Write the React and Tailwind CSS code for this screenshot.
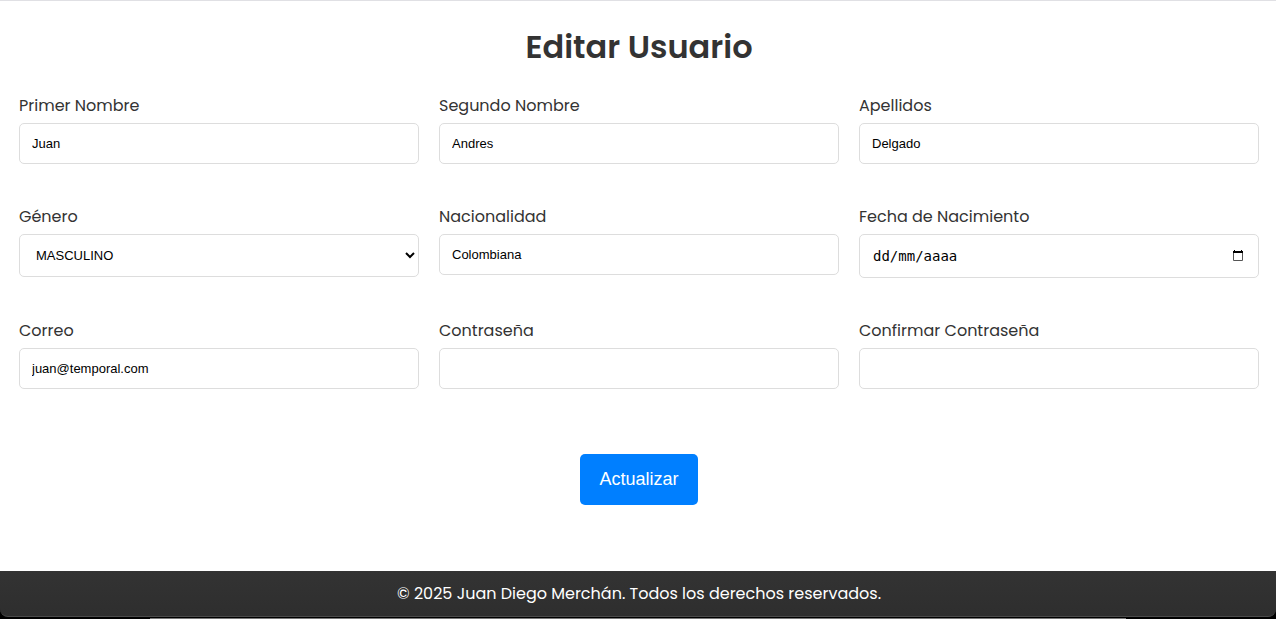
const controlClass =
  "w-full rounded-[5px] border border-[#dddddd] bg-white px-3 font-['Liberation_Sans',Arial,sans-serif] text-[13px] text-black";

function Field({ id, label, children }) {
  return (
    <div className="flex min-w-0 flex-col items-start gap-[5px]">
      <label htmlFor={id} className="text-base text-[#333333]">
        {label}
      </label>
      {children}
    </div>
  );
}

function TextField({ id, label, type = "text", value }) {
  return (
    <Field id={id} label={label}>
      <input id={id} name={id} type={type} defaultValue={value} className={`${controlClass} h-[41px]`} />
    </Field>
  );
}

function CalendarIcon() {
  return (
    <svg viewBox="0 0 12 14" className="h-[14px] w-3" aria-hidden="true">
      <path d="M1.5 4v7.5h9V4" fill="none" stroke="#555" strokeWidth="1" />
      <path d="M1 2h1V1h1v1h6V1h1v1h1v2H1z" fill="#000" />
    </svg>
  );
}

function DateField({ id, label }) {
  return (
    <Field id={id} label={label}>
      <div className="flex h-11 w-full items-center rounded-[5px] border border-[#dddddd] bg-white pr-[14px] pl-[13px]">
        <input
          id={id}
          name={id}
          type="text"
          placeholder="dd/mm/aaaa"
          className="min-w-0 flex-1 font-['DejaVu_Sans_Mono',monospace] text-sm text-black outline-none placeholder:text-black"
        />
        <button type="button" aria-label="Abrir calendario" className="flex">
          <CalendarIcon />
        </button>
      </div>
    </Field>
  );
}

export default function App() {
  return (
    <div className="flex min-h-screen flex-col bg-white font-['Poppins','Inter',sans-serif]">
      <main className="flex-1 border-t border-[#e0e0e4] pt-[22px] pr-[17px] pb-[66px] pl-[19px]">
        <h1 className="text-center text-[32px] leading-[48px] font-semibold text-[#333333]">Editar Usuario</h1>
        <form className="mt-[23px]" onSubmit={(event) => event.preventDefault()}>
          <div className="grid grid-cols-3 gap-x-5 gap-y-[41px]">
            <TextField id="primerNombre" label="Primer Nombre" value="Juan" />
            <TextField id="segundoNombre" label="Segundo Nombre" value="Andres" />
            <TextField id="apellidos" label="Apellidos" value="Delgado" />
            <Field id="genero" label="Género">
              <select id="genero" name="genero" defaultValue="MASCULINO" className={`${controlClass} h-[43px]`}>
                <option>MASCULINO</option>
                <option>FEMENINO</option>
              </select>
            </Field>
            <TextField id="nacionalidad" label="Nacionalidad" value="Colombiana" />
            <DateField id="fechaNacimiento" label="Fecha de Nacimiento" />
            <TextField id="correo" label="Correo" type="email" value="juan@temporal.com" />
            <TextField id="contrasena" label="Contraseña" type="password" />
            <TextField id="confirmarContrasena" label="Confirmar Contraseña" type="password" />
          </div>
          <div className="mt-[65px] flex justify-center">
            <button
              type="submit"
              className="rounded-[5px] bg-[#007fff] px-[19px] py-3 font-['Liberation_Sans',Arial,sans-serif] text-lg leading-[27px] text-white"
            >
              Actualizar
            </button>
          </div>
        </form>
      </main>
      <footer className="bg-black">
        <div className="rounded-b-lg border-b border-[#4a4a4a] bg-linear-to-b from-[#333333] to-[#2e2e2e] pt-[11px] pr-[17px] pb-[10px] pl-[19px] text-center text-base text-white">
          © 2025 Juan Diego Merchán. Todos los derechos reservados.
        </div>
        <div className="mx-[150px] mt-px h-px bg-[#777777]" />
      </footer>
    </div>
  );
}
